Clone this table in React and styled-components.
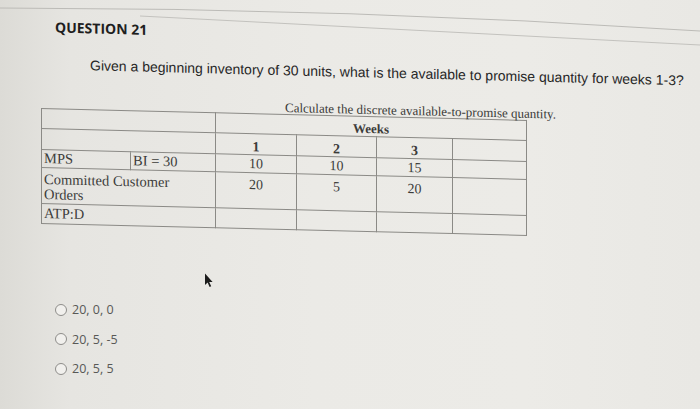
import React from "react";
import styled, { createGlobalStyle } from "styled-components";

const GlobalStyle = createGlobalStyle`
  html, body {
    margin: 0;
    padding: 0;
  }
  body {
    background: #e9e8e4;
  }
`;

const Screen = styled.div`
  position: relative;
  width: 700px;
  height: 409px;
  overflow: hidden;
  background: linear-gradient(90deg, #dcdbd6 0%, #e6e5e1 10%, #ebeae6 45%, #ecebe7 75%, #e9e8e4 100%);
  font-family: "Liberation Sans", Arial, sans-serif;
`;

const Sheet = styled.div`
  padding-top: 16px;
`;

// the photo is taken at an angle, so the lines lean down to the right
const Tilted = styled.div`
  transform: skewY(${(p) => p.$tilt}deg);
  transform-origin: 0 0;
`;

const Rules = styled.svg`
  position: absolute;
  top: 0;
  left: 0;
  pointer-events: none;
`;

const Title = styled(Tilted)`
  padding-left: 55px;
  font-family: "Open Sans", "Liberation Sans", sans-serif;
  font-weight: 700;
  font-size: 14px;
  line-height: 19px;
  color: #1e1e1e;
`;

const Prompt = styled(Tilted)`
  margin-top: 20px;
  padding-left: 90px;
  font-size: 14px;
  line-height: 16px;
  color: #262626;
  white-space: nowrap;
`;

const Figure = styled(Tilted)`
  padding-left: 41px;
`;

const Caption = styled.div`
  margin: 23px 0 0 244px;
  font-family: "Liberation Serif", "Times New Roman", serif;
  font-size: 13px;
  line-height: 13px;
  color: #3a3a38;
  white-space: nowrap;
`;

const Grid = styled.table`
  width: 485px;
  border-collapse: collapse;
  table-layout: fixed;
  font-family: "Liberation Serif", "Times New Roman", serif;
  color: #3c3c3a;
`;

const Row = styled.tr`
  height: ${(p) => p.$h}px;
`;

const Cell = styled.td`
  border: 1px solid #8b8a86;
  padding: ${(p) => (p.$top ? "3.5px 2px 0" : "0 2px")};
  font-size: ${(p) => (p.$num ? "14px" : "14.5px")};
  font-weight: ${(p) => (p.$bold ? 700 : 400)};
  line-height: 15px;
  text-align: ${(p) => (p.$num ? "center" : "left")};
  vertical-align: ${(p) => (p.$top ? "top" : "middle")};
`;

const Heading = styled(Cell)`
  padding-top: 4px;
  font-size: 13px;
`;

const WeekNo = styled(Cell)`
  padding-top: 4px;
`;

const Options = styled.div`
  margin-top: 72px;
  padding-left: 55px;
  display: flex;
  flex-direction: column;
`;

const Option = styled.label`
  height: 29.5px;
  display: flex;
  align-items: center;
  gap: 5px;
  font-family: "Open Sans", "Liberation Sans", sans-serif;
  font-size: 12.5px;
  color: #585856;
`;

const Radio = styled.span`
  width: 10px;
  height: 10px;
  border-radius: 50%;
  border: 1px solid #8e8d8a;
  background: #f1f0ed;
`;

const Pointer = styled.svg`
  position: absolute;
  left: 204px;
  top: 273px;
`;

const cols = [89, 85, 81, 80, 76, 74];
const answers = ["20, 0, 0", "20, 5, -5", "20, 5, 5"];

export default function App() {
  return (
    <>
      <GlobalStyle />
      <Screen>
        <Rules width="700" height="50">
          <path d="M0 8 Q350 8 700 31" stroke="#bcbbb7" strokeWidth="1" fill="none" />
          <path d="M140 16 L700 45" stroke="#c3c2be" strokeWidth="1" fill="none" />
        </Rules>
        <Sheet>
          <Title $tilt={1.5}>QUESTION 21</Title>
          <Prompt $tilt={1.45}>
            Given a beginning inventory of 30 units, what is the available to promise quantity for weeks 1-3?
          </Prompt>
          <Figure $tilt={1.4}>
            <Caption>Calculate the discrete available-to-promise quantity.</Caption>
            <Grid>
              <colgroup>
                {cols.map((w, i) => (
                  <col key={i} style={{ width: w }} />
                ))}
              </colgroup>
              <tbody>
                <Row $h={20}>
                  <Cell colSpan={2} />
                  <Heading colSpan={4} $num $bold>
                    Weeks
                  </Heading>
                </Row>
                <Row $h={21}>
                  <Cell colSpan={2} />
                  <WeekNo $num $bold>1</WeekNo>
                  <WeekNo $num $bold>2</WeekNo>
                  <WeekNo $num $bold>3</WeekNo>
                  <Cell />
                </Row>
                <Row $h={18}>
                  <Cell>MPS</Cell>
                  <Cell>BI = 30</Cell>
                  <Cell $num>10</Cell>
                  <Cell $num>10</Cell>
                  <Cell $num>15</Cell>
                  <Cell />
                </Row>
                <Row $h={36}>
                  <Cell colSpan={2} $top>
                    Committed Customer
                    <br />
                    Orders
                  </Cell>
                  <Cell $num $top>20</Cell>
                  <Cell $num $top>5</Cell>
                  <Cell $num $top>20</Cell>
                  <Cell $top />
                </Row>
                <Row $h={20}>
                  <Cell colSpan={2}>ATP:D</Cell>
                  <Cell />
                  <Cell />
                  <Cell />
                  <Cell />
                </Row>
              </tbody>
            </Grid>
          </Figure>
          <Options>
            {answers.map((a) => (
              <Option key={a}>
                <Radio />
                {a}
              </Option>
            ))}
          </Options>
        </Sheet>
        <Pointer width="10" height="15" viewBox="0 0 10 15">
          <path d="M1 0.5 L1 12 L3.6 9.6 L5.6 14 L7.2 13.3 L5.2 9 L8.6 9 Z" fill="#1c1c1c" />
        </Pointer>
      </Screen>
    </>
  );
}
